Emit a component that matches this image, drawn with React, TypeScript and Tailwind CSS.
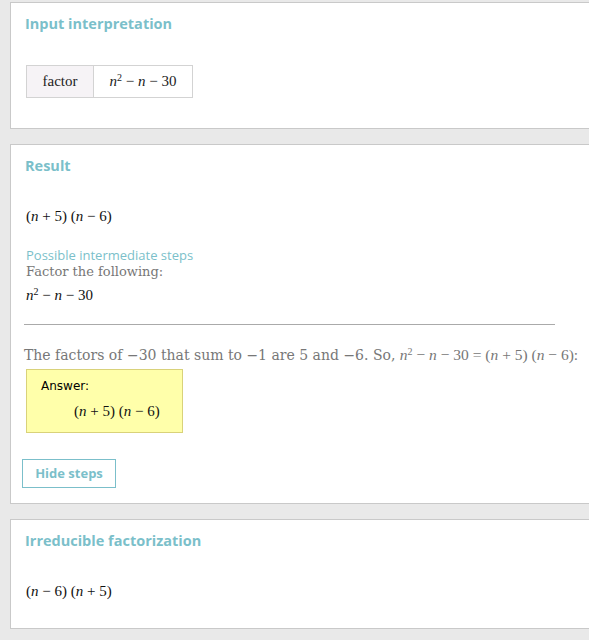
import React from "react";

const serif = { fontFamily: '"Liberation Serif", "DejaVu Serif", serif' };
const prose = { fontFamily: '"DejaVu Serif", "Liberation Serif", serif' };

function N() {
  return <i style={serif}>n</i>;
}

function Card({ children, className = "" }: { children: React.ReactNode; className?: string }) {
  return (
    <div className={`w-[640px] bg-white border border-[#c9c9c9] pl-[14px] ${className}`}>{children}</div>
  );
}

function Heading({ children }: { children: React.ReactNode }) {
  return (
    <div className="font-['Open_Sans',sans-serif] font-bold text-[14.5px] text-[#7bbfca] leading-[20px]">
      {children}
    </div>
  );
}

export default function App() {
  return (
    <div className="w-[589px] h-[640px] overflow-hidden bg-[#e9e9e9] pl-[10px] pt-[2px]">
      <Card className="h-[127px] pt-[11px]">
        <Heading>Input interpretation</Heading>
        <div className="mt-[31px] ml-[1px] flex w-fit border border-[#d3d3d3] text-[15px] text-[#222]" style={serif}>
          <div className="w-[67px] h-[31px] flex items-center justify-center bg-[#f6f3f6] border-r border-[#d3d3d3]">factor</div>
          <div className="w-[98px] h-[31px] flex items-center justify-center">
            <span><N /><sup className="text-[10px]">2</sup> − <N /> − 30</span>
          </div>
        </div>
      </Card>

      <Card className="mt-[15px] h-[360px] pt-[11px]">
        <Heading>Result</Heading>
        <div className="mt-[30px] ml-[1px] text-[15px] text-[#111] leading-[20px]" style={serif}>
          (<N /> + 5) (<N /> − 6)
        </div>
        <div className="mt-[21px] ml-[1px] font-['Open_Sans',sans-serif] text-[13px] text-[#7bbfca] leading-[16px]">
          Possible intermediate steps
        </div>
        <div className="ml-[1px] text-[13px] text-[#777] leading-[17px]" style={prose}>
          Factor the following:
        </div>
        <div className="mt-[5px] ml-[1px] text-[15px] text-[#111] leading-[20px]" style={serif}>
          <N /><sup className="text-[10px]">2</sup> − <N /> − 30
        </div>
        <div className="mt-[19px] w-[531px] h-px bg-[#aaaaaa] -ml-[1px]" />
        <div className="mt-[20px] -ml-[1px] text-[14px] text-[#777] leading-[20px] whitespace-nowrap" style={prose}>
          The factors of −30 that sum to −1 are 5 and −6. So,{" "}
          <span className="text-[15.5px]" style={serif}>
            <N /><sup className="text-[10px]">2</sup> − <N /> − 30 = (<N /> + 5) (<N /> − 6):
          </span>
        </div>
        <div className="mt-[4px] ml-[1px] w-[157px] h-[64px] bg-[#ffffaa] border border-[#d9d27a] pl-[14px] pt-[8px]">
          <div className="font-['DejaVu_Sans',sans-serif] text-[12px] text-black leading-[16px]">Answer:</div>
          <div className="mt-[7px] ml-[33px] text-[15px] text-[#111] leading-[20px]" style={serif}>
            (<N /> + 5) (<N /> − 6)
          </div>
        </div>
        <div className="mt-[26px] -ml-[3px] w-[94px] h-[29px] border border-[#7bbfca] flex items-center justify-center font-['Open_Sans',sans-serif] font-bold text-[13px] text-[#7bbfca]">
          Hide steps
        </div>
      </Card>

      <Card className="mt-[15px] h-[110px] pt-[11px]">
        <Heading>Irreducible factorization</Heading>
        <div className="mt-[30px] ml-[1px] text-[15px] text-[#111] leading-[20px]" style={serif}>
          (<N /> − 6) (<N /> + 5)
        </div>
      </Card>
    </div>
  );
}
